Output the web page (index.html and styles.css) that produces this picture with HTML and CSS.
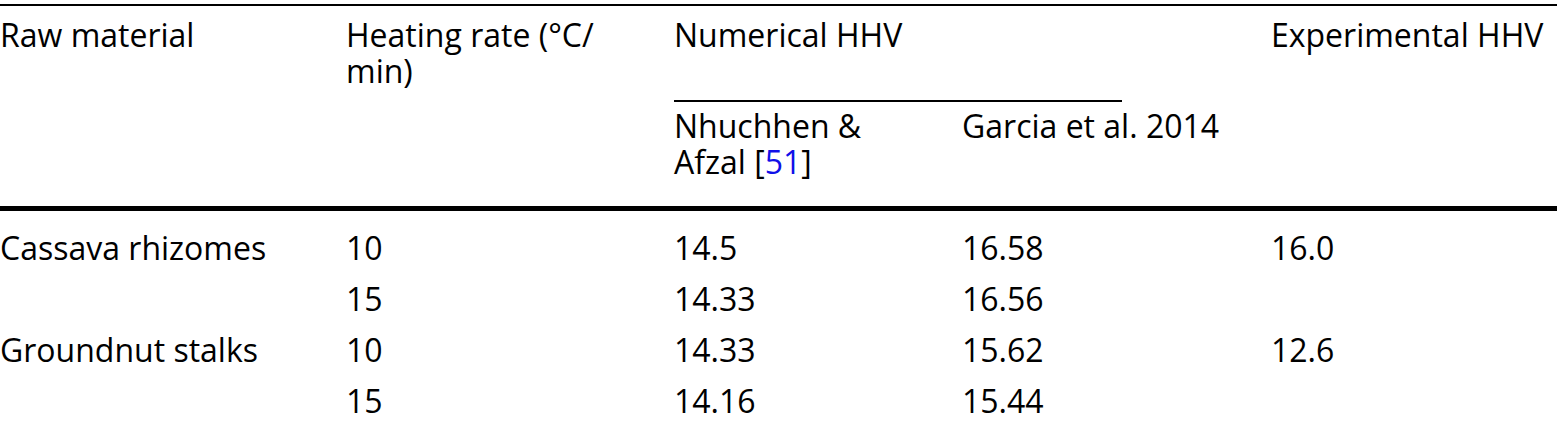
FILE: index.html
```html
<!DOCTYPE html>
<html lang="en">
<head>
    <meta charset="UTF-8">
    <meta name="viewport" content="width=device-width, initial-scale=1.0">
    <title>HHV comparison</title>
    <link rel="stylesheet" href="styles.css">
</head>
<body>
    <table class="data-table">
        <colgroup>
            <col class="col-material">
            <col class="col-rate">
            <col class="col-nhuchhen">
            <col class="col-garcia">
            <col class="col-experimental">
        </colgroup>
        <thead>
            <tr>
                <th rowspan="2">Raw material</th>
                <th rowspan="2">Heating rate (°C/<br>min)</th>
                <th colspan="2" class="group-head">
                    Numerical HHV
                    <div class="group-rule"></div>
                </th>
                <th rowspan="2" class="nowrap">Experimental HHV</th>
            </tr>
            <tr>
                <th class="sub-head">Nhuchhen &amp;<br>Afzal [<a href="#ref-51" class="cite">51</a>]</th>
                <th class="sub-head nowrap">Garcia et al. 2014</th>
            </tr>
        </thead>
        <tbody>
            <tr>
                <td rowspan="2">Cassava rhizomes</td>
                <td>10</td>
                <td>14.5</td>
                <td>16.58</td>
                <td rowspan="2">16.0</td>
            </tr>
            <tr>
                <td>15</td>
                <td>14.33</td>
                <td>16.56</td>
            </tr>
            <tr>
                <td rowspan="2">Groundnut stalks</td>
                <td>10</td>
                <td>14.33</td>
                <td>15.62</td>
                <td rowspan="2">12.6</td>
            </tr>
            <tr>
                <td>15</td>
                <td>14.16</td>
                <td>15.44</td>
            </tr>
        </tbody>
    </table>
</body>
</html>
```

FILE: styles.css
```css
* {
    margin: 0;
    padding: 0;
    box-sizing: border-box;
}

body {
    background: white;
    color: #000;
    font-family: "Open Sans", "Liberation Sans", sans-serif;
    font-size: 32px;
    line-height: 36px;
    padding-top: 4px;
}

.data-table {
    width: 1557px;
    table-layout: fixed;
    border-collapse: collapse;
    border-top: 2px solid #000;
}

.col-material { width: 346px; }
.col-rate { width: 328px; }
.col-nhuchhen { width: 288px; }
.col-garcia { width: 309px; }
.col-experimental { width: 286px; }

.data-table th,
.data-table td {
    text-align: left;
    vertical-align: top;
    font-weight: normal;
    padding: 0 12px 0 0;
}

.nowrap {
    white-space: nowrap;
}

.data-table thead th {
    padding-top: 11px;
}

.data-table thead tr:last-child th,
.data-table thead th[rowspan] {
    border-bottom: 5px solid #000;
}

.group-head {
    white-space: nowrap;
}

.group-rule {
    width: 448px;
    margin-top: 47px;
    border-top: 2px solid #000;
}

.data-table thead .sub-head {
    padding-top: 6px;
    padding-bottom: 26px;
}

.cite {
    color: #1010e8;
    text-decoration: none;
}

.data-table td {
    padding-top: 7px;
    padding-bottom: 8px;
}

.data-table tbody tr:first-child td {
    padding-top: 19px;
}
```
